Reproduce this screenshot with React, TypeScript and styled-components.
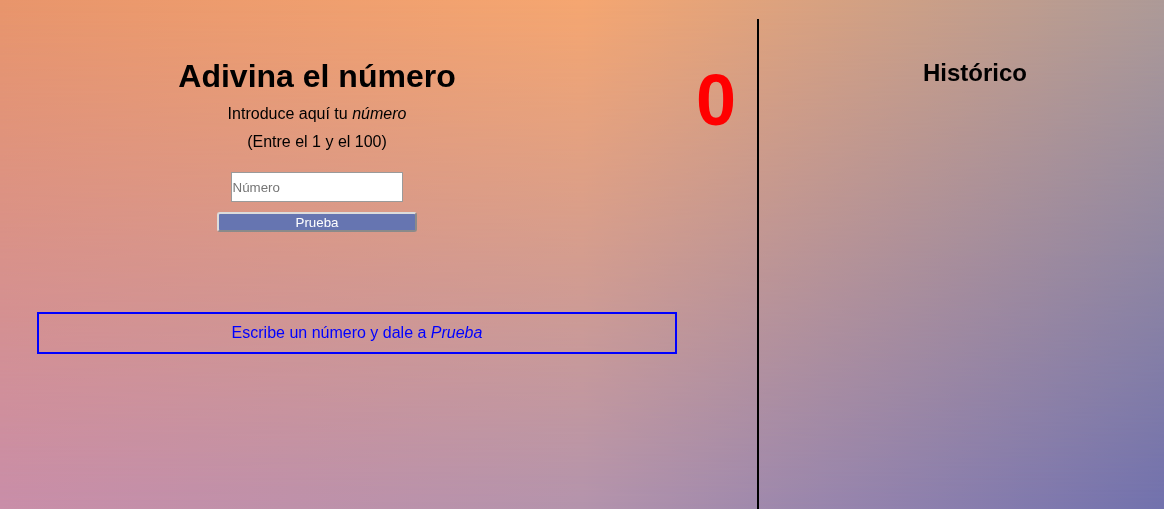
import React from "react";
import styled, { createGlobalStyle } from "styled-components";

const GlobalStyle = createGlobalStyle`
  html, body {
    margin: 0;
    padding: 0;
    height: 100%;
  }
  body {
    font-family: "Liberation Sans", Arial, sans-serif;
    background: linear-gradient(to right, #c98ea9 0%, #b494ad 50%, #7272ae 100%);
    position: relative;
    overflow: hidden;
  }
  body::before {
    content: "";
    position: fixed;
    inset: 0;
    background: linear-gradient(to right, #e8956b 0%, #f5a670 50%, #ad9a97 100%);
    -webkit-mask-image: linear-gradient(to bottom, #000 0%, transparent 100%);
    mask-image: linear-gradient(to bottom, #000 0%, transparent 100%);
    pointer-events: none;
    z-index: 0;
  }
  #root {
    position: relative;
    z-index: 1;
  }
`;

const Page = styled.div`
  display: flex;
  height: 100vh;
`;

const Main = styled.main`
  flex: 0 0 757px;
  display: flex;
  flex-direction: column;
`;

const TopRow = styled.div`
  display: flex;
`;

const Game = styled.section`
  flex: 0 0 634px;
  display: flex;
  flex-direction: column;
  align-items: center;
  padding-top: 58px;
`;

const Title = styled.h1`
  margin: 0;
  font-size: 32px;
  font-weight: bold;
  color: #000;
`;

const Line = styled.p<{ $top: number }>`
  margin: ${(p) => p.$top}px 0 0;
  font-size: 16px;
  color: #000;
`;

const Input = styled.input`
  margin-top: 21px;
  margin-right: 1px;
  width: 172px;
  height: 30px;
  box-sizing: border-box;
  border: 1px solid #9a9a9a;
  background: #fff;
  padding: 1px 1px;
  font-family: "Liberation Sans", Arial, sans-serif;
  font-size: 13.33px;
  outline: none;
  &::placeholder {
    color: #757575;
  }
`;

const Button = styled.button`
  margin-top: 10px;
  width: 200px;
  height: 20px;
  box-sizing: border-box;
  padding: 1px 0 0;
  background: #6675b1;
  color: #fff;
  font-family: "Liberation Sans", Arial, sans-serif;
  font-size: 13.33px;
  border: 2px solid;
  border-color: #dcdcdc #8a8a8a #8a8a8a #dcdcdc;
  border-radius: 3px;
  line-height: 15px;
  cursor: pointer;
`;

const Counter = styled.div`
  flex: 1;
  text-align: right;
  padding-right: 21px;
  padding-top: 59px;
  font-size: 72px;
  font-weight: bold;
  color: #ff0000;
`;

const Message = styled.div`
  margin: 80px 0 0 37px;
  width: 640px;
  box-sizing: border-box;
  border: 2px solid #0000ff;
  padding: 10px;
  text-align: center;
  font-size: 16px;
  color: #0000ff;
`;

const History = styled.aside`
  flex: 1;
  margin-top: 19px;
  border-left: 2px solid #000;
  display: flex;
  flex-direction: column;
  align-items: center;
  padding-left: 27px;
`;

const HistoryTitle = styled.h2`
  margin: 40px 0 0;
  font-size: 24px;
  font-weight: bold;
  color: #000;
`;

export default function App() {
  return (
    <>
      <GlobalStyle />
      <Page>
        <Main>
          <TopRow>
            <Game>
              <Title>Adivina el número</Title>
              <Line $top={10}>
                Introduce aquí tu <em>número</em>
              </Line>
              <Line $top={10}>(Entre el 1 y el 100)</Line>
              <Input type="text" placeholder="Número" />
              <Button type="button">Prueba</Button>
            </Game>
            <Counter>0</Counter>
          </TopRow>
          <Message>
            Escribe un número y dale a <em>Prueba</em>
          </Message>
        </Main>
        <History>
          <HistoryTitle>Histórico</HistoryTitle>
        </History>
      </Page>
    </>
  );
}
